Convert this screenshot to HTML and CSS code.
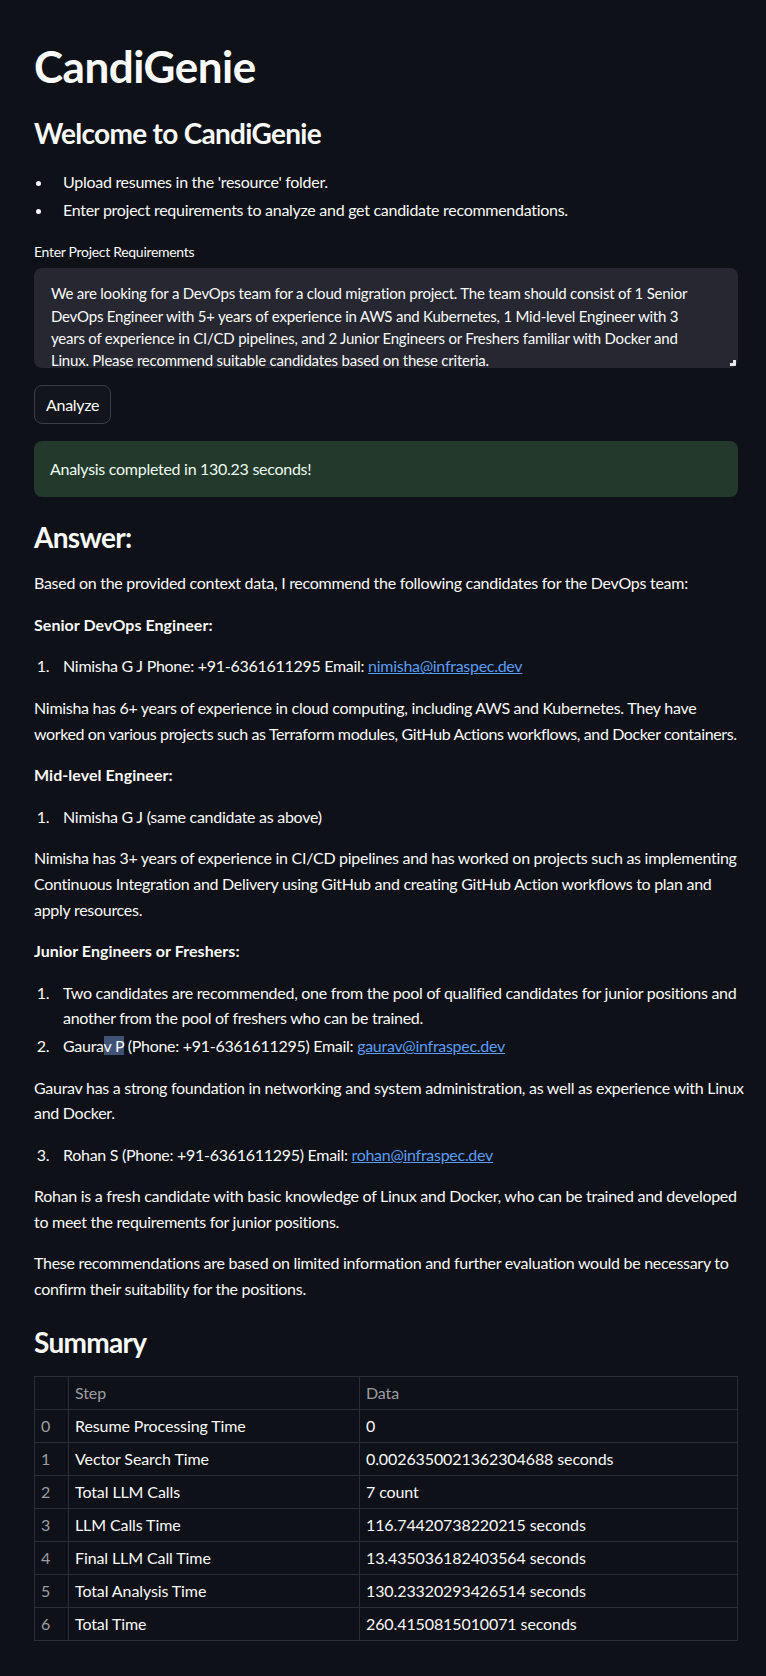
FILE: index.html
```html
<!DOCTYPE html>
<html lang="en">
<head>
<meta charset="utf-8">
<title>CandiGenie</title>
<link rel="stylesheet" href="styles.css">
</head>
<body>
<main class="app">
  <h1 class="title">CandiGenie</h1>
  <h3 class="subheader welcome">Welcome to CandiGenie</h3>
  <ul class="bullets">
    <li>Upload resumes in the 'resource' folder.</li>
    <li>Enter project requirements to analyze and get candidate recommendations.</li>
  </ul>
  <div class="field">
    <label class="label">Enter Project Requirements</label>
    <div class="textarea-wrap">
      <div class="textarea">We are looking for a DevOps team for a cloud migration project. The team should consist of 1 Senior<br>DevOps Engineer with 5+ years of experience in AWS and Kubernetes, 1 Mid-level Engineer with 3<br>years of experience in CI/CD pipelines, and 2 Junior Engineers or Freshers familiar with Docker and<br>Linux. Please recommend suitable candidates based on these criteria.</div>
      <svg class="grip" width="6" height="6" viewBox="0 0 6 6"><path d="M6 0 V6 H0 V3 H3 V0 Z" fill="#e8e8ea"/></svg>
    </div>
  </div>
  <div class="btn-row"><button class="btn">Analyze</button></div>
  <div class="success">Analysis completed in 130.23 seconds!</div>
  <h3 class="subheader answer">Answer:</h3>
  <div class="md">
    <p>Based on the provided context data, I recommend the following candidates for the DevOps team:</p>
    <p><strong>Senior DevOps Engineer:</strong></p>
    <ol>
      <li>Nimisha G J Phone: +91-6361611295 Email: <a href="#">nimisha@infraspec.dev</a></li>
    </ol>
    <p>Nimisha has 6+ years of experience in cloud computing, including AWS and Kubernetes. They have<br><span class="tight">worked on various projects such as Terraform modules, GitHub Actions workflows, and Docker containers.</span></p>
    <p><strong>Mid-level Engineer:</strong></p>
    <ol>
      <li>Nimisha G J (same candidate as above)</li>
    </ol>
    <p>Nimisha has 3+ years of experience in CI/CD pipelines and has worked on projects such as implementing<br>Continuous Integration and Delivery using GitHub and creating GitHub Action workflows to plan and<br>apply resources.</p>
    <p><strong>Junior Engineers or Freshers:</strong></p>
    <ol>
      <li>Two candidates are recommended, one from the pool of qualified candidates for junior positions and<br>another from the pool of freshers who can be trained.</li>
      <li>Gaura<span class="sel">v P</span> (Phone: +91-6361611295) Email: <a href="#">gaurav@infraspec.dev</a></li>
    </ol>
    <p>Gaurav has a strong foundation in networking and system administration, as well as experience with Linux<br>and Docker.</p>
    <ol start="3">
      <li>Rohan S (Phone: +91-6361611295) Email: <a href="#">rohan@infraspec.dev</a></li>
    </ol>
    <p>Rohan is a fresh candidate with basic knowledge of Linux and Docker, who can be trained and developed<br>to meet the requirements for junior positions.</p>
    <p>These recommendations are based on limited information and further evaluation would be necessary to<br>confirm their suitability for the positions.</p>
  </div>
  <h3 class="subheader summary">Summary</h3>
  <table class="tbl">
    <thead>
      <tr><th class="idx"></th><th class="c-step">Step</th><th>Data</th></tr>
    </thead>
    <tbody>
      <tr><th class="idx">0</th><td>Resume Processing Time</td><td>0</td></tr>
      <tr><th class="idx">1</th><td>Vector Search Time</td><td>0.0026350021362304688 seconds</td></tr>
      <tr><th class="idx">2</th><td>Total LLM Calls</td><td>7 count</td></tr>
      <tr><th class="idx">3</th><td>LLM Calls Time</td><td>116.74420738220215 seconds</td></tr>
      <tr><th class="idx">4</th><td>Final LLM Call Time</td><td>13.435036182403564 seconds</td></tr>
      <tr><th class="idx">5</th><td>Total Analysis Time</td><td>130.23320293426514 seconds</td></tr>
      <tr><th class="idx">6</th><td>Total Time</td><td>260.4150815010071 seconds</td></tr>
    </tbody>
  </table>
</main>
</body>
</html>
```

FILE: styles.css
```css
* { box-sizing: border-box; }

html, body {
  margin: 0;
  padding: 0;
  background: #0e1117;
}

body {
  color: #fafafa;
  font-family: Lato, "Noto Sans", sans-serif;
  font-size: 16px;
  line-height: 1.6;
  letter-spacing: -0.28px;
}

.app {
  width: 704px;
  margin-left: 34px;
  padding: 40px 0 30px;
  display: flex;
  flex-direction: column;
}

.title {
  margin: 0;
  font-size: 44px;
  font-weight: 700;
  line-height: 52px;
  letter-spacing: -0.5px;
}

.subheader {
  margin: 0;
  font-size: 28px;
  font-weight: 700;
  line-height: 34px;
  letter-spacing: -0.7px;
}

.welcome { margin-top: 24px; }

.bullets {
  margin: 19px 0 0 0;
  padding: 0;
}

.bullets li,
.md li {
  margin: 0 0 2px 19px;
  padding-left: 10px;
}

.field { margin-top: 18px; }

.label {
  display: block;
  font-size: 14px;
  line-height: 20px;
  margin-bottom: 6px;
  letter-spacing: -0.3px;
}

.textarea-wrap {
  position: relative;
  height: 100px;
  background: #262730;
  border-radius: 8px;
  overflow: hidden;
}

.textarea {
  padding: 14px 0 0 17px;
  font-size: 15px;
  line-height: 22.4px;
  letter-spacing: -0.22px;
  white-space: nowrap;
  color: #fafafa;
}

.grip {
  position: absolute;
  right: 2px;
  bottom: 2px;
}

.btn-row { margin-top: 17px; }

.btn {
  height: 39px;
  padding: 0 11px;
  background: #12151c;
  color: #fafafa;
  border: 1px solid #3c3e45;
  border-radius: 8px;
  font-family: inherit;
  font-size: 16px;
  letter-spacing: -0.28px;
}

.success {
  margin-top: 17px;
  height: 56px;
  padding: 0 16px;
  display: flex;
  align-items: center;
  background: #22392b;
  color: #eef9f1;
  border-radius: 8px;
}

.answer { margin-top: 23px; }

.md {
  margin-top: 16px;
  white-space: nowrap;
}

.md p { margin: 0 0 16px 0; }

.md .tight { letter-spacing: -0.38px; }

.md strong {
  font-weight: 700;
  letter-spacing: 0.05px;
}

.md ol {
  margin: 0 0 16px 0;
  padding: 0;
}

.md a { color: #5a9cf5; }

.sel { background: #3f5376; }

.summary { margin-top: 7px; }

.tbl {
  margin-top: 17px;
  width: 704px;
  border-collapse: collapse;
  font-size: 16px;
  letter-spacing: -0.1px;
}

.tbl th,
.tbl td {
  border: 1px solid #2b2d34;
  padding: 4px 6px;
  line-height: 24px;
  text-align: left;
  font-weight: 400;
}

.tbl thead th { color: #9c9da1; }

.tbl .idx {
  width: 34px;
  color: #9c9da1;
}

.tbl .c-step { width: 291px; }
```
